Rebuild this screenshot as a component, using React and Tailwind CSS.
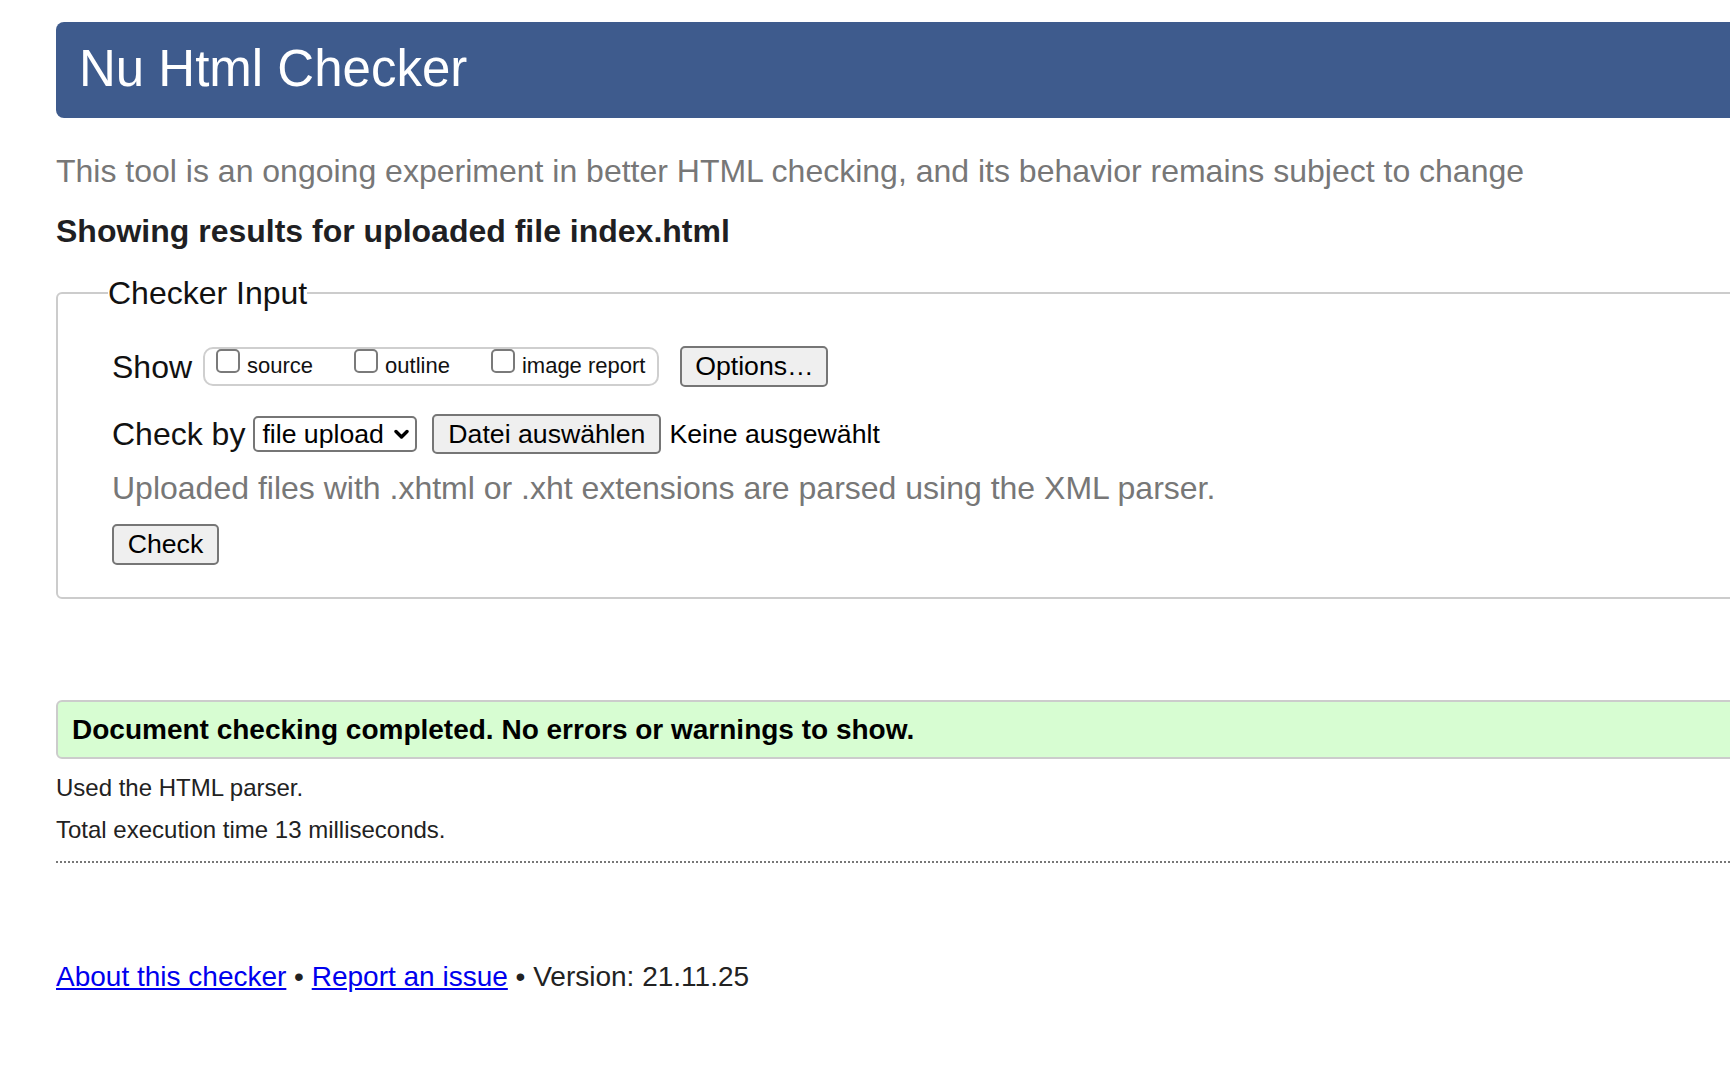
import React from 'react';

const FONT = '"Liberation Sans", Arial, Helvetica, sans-serif';

function Checkbox() {
  return <span className="inline-block w-[24px] h-[24px] border-2 border-[#7a7a7a] rounded-[5px] bg-white" />;
}

function ShowOption({ label }) {
  return (
    <label className="inline-flex items-baseline">
      <Checkbox />
      <span className="ml-[7px] text-[22px] leading-[24px] text-[#111]">{label}</span>
    </label>
  );
}

function Button({ children, className = '' }) {
  return (
    <button className={`h-[40px] bg-[#efefef] border-2 border-[#767676] rounded-[5px] text-[26.67px] leading-none text-black flex items-center justify-center ${className}`}>
      {children}
    </button>
  );
}

export default function App() {
  return (
    <div className="min-h-screen bg-white overflow-hidden text-[#222]" style={{ fontFamily: FONT }}>
      <div className="ml-[56px] mr-[-24px]">
        {/* Banner */}
        <div className="mt-[22px] h-[96px] rounded-[8px] bg-[#3e5b8d] flex items-center pl-[23px] pb-[3px]">
          <h1 className="text-[51px] leading-none text-white font-normal">Nu Html Checker</h1>
        </div>

        <p className="mt-[35px] text-[32px] leading-[36px] text-[#777]">
          This tool is an ongoing experiment in better HTML checking, and its behavior remains subject to change
        </p>
        <h2 className="mt-[24px] text-[32px] leading-[36px] font-bold text-[#1f1f23]">
          Showing results for uploaded file index.html
        </h2>

        {/* Checker input */}
        <fieldset className="mt-[24px] border-2 border-[#cccccc] rounded-[6px] pl-[50px] pb-[32px]">
          <legend className="text-[32px] leading-[40px] text-[#111] px-0">Checker Input</legend>
          <div className="pl-[4px]">
            <div className="mt-[33px] flex items-center">
              <span className="text-[32px] leading-[36px] text-[#111]">Show</span>
              <span className="ml-[11px] inline-flex items-baseline gap-[41px] h-[39px] border-2 border-[#cfcfcf] rounded-[10px] pl-[11px] pr-[12px]">
                <ShowOption label="source" />
                <ShowOption label="outline" />
                <ShowOption label="image report" />
              </span>
              <Button className="ml-[21px] w-[148px] h-[41px]">Options…</Button>
            </div>

            <div className="mt-[27px] flex items-center">
              <span className="text-[32px] leading-[36px] text-[#111]">Check by</span>
              <span className="ml-[8px] w-[164px] h-[36px] border-2 border-[#767676] rounded-[5px] bg-white flex items-center pl-[7px] pr-[6px]">
                <span className="text-[26.67px] leading-none text-black">file upload</span>
                <svg className="ml-auto" width="15" height="11" viewBox="0 0 15 11">
                  <path d="M2 2.5 L7.5 8 L13 2.5" fill="none" stroke="#000" strokeWidth="3.4" strokeLinecap="round" strokeLinejoin="round" />
                </svg>
              </span>
              <Button className="ml-[15px] w-[229px]">Datei auswählen</Button>
              <span className="ml-[8px] text-[26.67px] leading-none text-black">Keine ausgewählt</span>
            </div>

            <p className="mt-[16px] text-[32px] leading-[36px] text-[#777]">
              Uploaded files with .xhtml or .xht extensions are parsed using the XML parser.
            </p>

            <Button className="mt-[18px] w-[107px] h-[41px]">Check</Button>
          </div>
        </fieldset>

        {/* Result */}
        <div className="mt-[101px] h-[59px] bg-[#d7fdd2] border-2 border-[#cccccc] rounded-[6px] flex items-center pl-[14px]">
          <span className="text-[28px] leading-[32px] font-bold text-black">
            Document checking completed. No errors or warnings to show.
          </span>
        </div>

        <p className="mt-[15px] text-[24px] leading-[28px] text-[#222]">Used the HTML parser.</p>
        <p className="mt-[14px] text-[24px] leading-[28px] text-[#222]">Total execution time 13 milliseconds.</p>

        <div className="mt-[17px] border-t-2 border-dotted border-[#777]" />

        <p className="mt-[98px] text-[28px] leading-[32px] text-[#222]">
          <a href="#" className="text-[#0000ee] underline">About this checker</a>
          {' • '}
          <a href="#" className="text-[#0000ee] underline">Report an issue</a>
          {' • Version: 21.11.25'}
        </p>
      </div>
    </div>
  );
}
